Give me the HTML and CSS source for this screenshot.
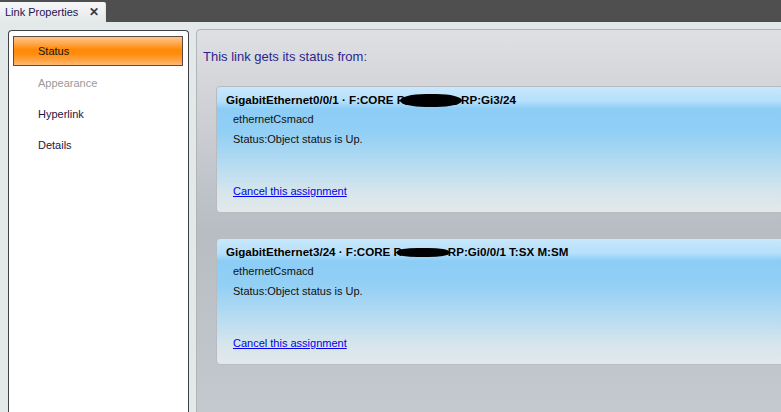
FILE: index.html
```html
<!DOCTYPE html>
<html>
<head>
<meta charset="utf-8">
<link rel="stylesheet" href="styles.css">
</head>
<body>
<div class="topbar">
  <div class="tab"><span class="tab-title">Link Properties</span><span class="tab-close">✕</span></div>
</div>
<div class="main">
  <div class="nav">
    <div class="nav-item active">Status</div>
    <div class="nav-item disabled">Appearance</div>
    <div class="nav-item">Hyperlink</div>
    <div class="nav-item">Details</div>
  </div>
  <div class="content">
    <div class="heading">This link gets its status from:</div>
    <div class="card">
      <div class="card-title">GigabitEthernet0/0/1 · F:CORE R<span class="redact r1"></span>RP:Gi3/24</div>
      <div class="card-line">ethernetCsmacd</div>
      <div class="card-line">Status:Object status is Up.</div>
      <a class="card-link" href="#">Cancel this assignment</a>
    </div>
    <div class="card">
      <div class="card-title">GigabitEthernet3/24 · F:CORE R<span class="redact r2"></span>RP:Gi0/0/1 T:SX M:SM</div>
      <div class="card-line">ethernetCsmacd</div>
      <div class="card-line">Status:Object status is Up.</div>
      <a class="card-link" href="#">Cancel this assignment</a>
    </div>
  </div>
</div>
</body>
</html>
```
FILE: styles.css
```css
html, body {
  margin: 0;
  padding: 0;
  width: 781px;
  height: 412px;
  overflow: hidden;
  background: #e3e8e8;
  font-family: "Liberation Sans", Arial, sans-serif;
  font-size: 11px;
}

.topbar {
  height: 22px;
  background: #4f4f4f;
  padding-top: 2px;
  box-sizing: border-box;
  display: flex;
}

.tab {
  width: 106px;
  height: 20px;
  box-sizing: border-box;
  background: linear-gradient(to bottom, #f6f7f8 0%, #eceef0 60%, #e3e8e8 100%);
  border-right: 1px solid #c8eef6;
  border-top-right-radius: 2px;
  display: flex;
  align-items: center;
  padding-left: 5px;
}

.tab-title {
  color: #24144f;
  font-size: 11px;
}

.tab-close {
  margin-left: 11px;
  font-weight: bold;
  font-size: 12px;
  color: #3a3a3a;
}

.main {
  display: flex;
  gap: 7px;
  padding: 7px 0 0 8px;
  height: 390px;
  box-sizing: border-box;
  overflow: hidden;
}

.nav {
  flex: 0 0 181px;
  box-sizing: border-box;
  margin-top: 1px;
  background: #ffffff;
  border: 1px solid #3f4246;
  border-bottom: none;
  border-radius: 4px 4px 0 0;
  padding: 5px 0 0 4px;
  height: 400px;
}

.nav-item {
  width: 170px;
  height: 31px;
  box-sizing: border-box;
  padding-left: 25px;
  display: flex;
  align-items: center;
  color: #1c1540;
}

.nav-item.active {
  height: 30px;
  margin-bottom: 1px;
  padding-left: 24px;
  border: 1px solid #5a4c44;
  background: linear-gradient(to bottom, #ffc68e 0%, #ffa546 25%, #ff8a06 45%, #ff8c0c 60%, #ffa548 85%, #ffb978 100%);
  color: #141414;
}

.nav-item.disabled {
  color: #9a9a9a;
}

.content {
  flex: 0 0 640px;
  box-sizing: border-box;
  height: 400px;
  border: 1px solid #b2b4b7;
  border-radius: 4px 0 0 0;
  background: linear-gradient(to bottom, #dfe0e3 0px, #d4d5d9 56px, #bdc1c8 170px, #b8bdc4 200px, #c4c9cf 380px);
  padding: 19px 0 0 19px;
}

.heading {
  font-size: 13px;
  color: #2c1f8f;
  margin-left: -13px;
  height: 37px;
}

.card {
  width: 640px;
  height: 127px;
  box-sizing: border-box;
  border: 1px solid #b8bcc0;
  border-radius: 4px 0 0 4px;
  background: linear-gradient(to bottom, #c8e8fc 0px, #b6e0fb 14px, #8ccdf6 22px, #92cff5 45px, #b8dcf1 80px, #d6e5ec 105px, #e3e9ea 125px);
  padding: 5px 0 0 9px;
  margin-bottom: 25px;
  display: flex;
  flex-direction: column;
}

.card-title {
  font-weight: bold;
  font-size: 11.6px;
  color: #000000;
  height: 15px;
  line-height: 15px;
  white-space: nowrap;
}

.redact {
  display: inline-block;
  vertical-align: middle;
  background: #000000;
  margin-left: -5px;
  margin-right: -1px;
}

.r1 {
  width: 62px;
  height: 13px;
  border-radius: 50% / 60%;
}

.r2 {
  width: 52px;
  height: 9px;
  border-radius: 40%;
}

.card-line {
  margin-left: 7px;
  height: 20px;
  line-height: 20px;
  color: #111111;
}

.card-title + .card-line {
  margin-top: 2px;
}

.card-link {
  margin-left: 7px;
  margin-top: 36px;
  color: #0000ee;
  text-decoration: underline;
  align-self: flex-start;
}
```
